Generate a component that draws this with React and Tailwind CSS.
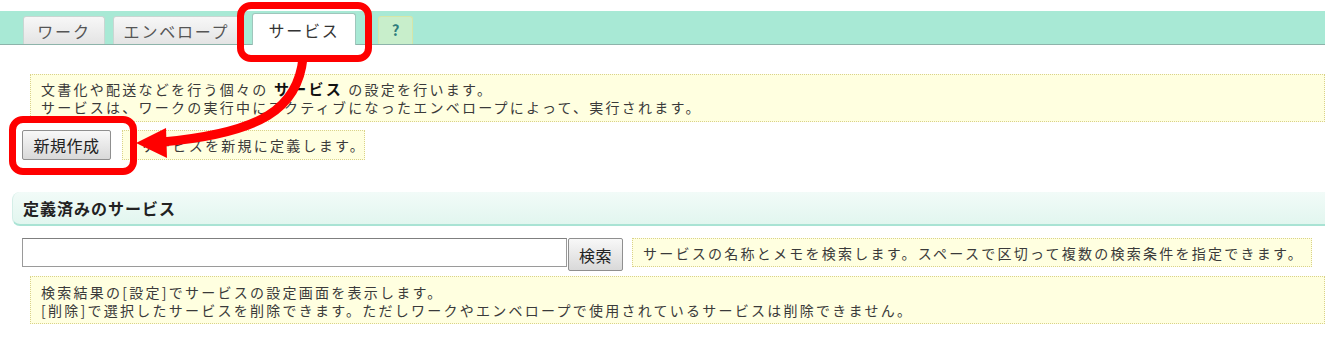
import React from 'react';

const font = { fontFamily: '"Noto Sans CJK JP", "Noto Sans", sans-serif' };

function Tab({ label, active, help, className }) {
  if (help) {
    return (
      <div className={`flex h-[28px] items-center justify-center rounded-t-[3px] border border-b-0 border-[#d6e6a8] bg-[#c8eecb] text-[15px] font-bold text-[#2f7d7d] ${className}`}>
        {label}
      </div>
    );
  }
  return (
    <div
      className={
        active
          ? `relative -mb-px flex h-[32px] items-center justify-center rounded-t-[3px] border border-b-0 border-[#9fc6bc] bg-white text-[16px] tracking-[1.8px] text-[#333] ${className}`
          : `flex h-[28px] items-center justify-center rounded-t-[3px] border border-b-0 border-[#c9d6d2] bg-gradient-to-b from-[#f7f7f7] to-[#e4e4e4] text-[16px] tracking-[1.8px] text-[#555] ${className}`
      }
    >
      {label}
    </div>
  );
}

function Note({ children, className }) {
  return (
    <div className={`whitespace-nowrap border border-dotted border-[#d9d28a] bg-[#ffffe0] text-[14px] leading-[18px] tracking-[2.25px] text-[#3a3a3a] ${className}`}>
      {children}
    </div>
  );
}

export default function App() {
  return (
    <div className="relative h-[345px] w-[1325px] overflow-hidden bg-white" style={font}>
      {/* Tabs */}
      <div className="mt-[11px] flex h-[34px] items-end border-b border-[#8db3aa] bg-[#a8e9d5] pl-[23px]">
        <Tab label="ワーク" className="w-[82px]" />
        <Tab label="エンベロープ" className="ml-[8px] w-[127px]" />
        <Tab label="サービス" active className="ml-[12px] w-[104px]" />
        <Tab label="?" help className="ml-[22px] w-[35px]" />
      </div>

      <Note className="ml-[30px] mt-[29px] h-[48px] px-[10px] pt-[5px]">
        <div>
          文書化や配送などを行う個々の <b className="text-[15px] font-bold text-[#111]">サービス</b> の設定を行います。
        </div>
        <div>サービスは、ワークの実行中にアクティブになったエンベロープによって、実行されます。</div>
      </Note>

      <div className="mt-[8px] flex items-center pl-[22px]">
        <button className="h-[30px] w-[89px] rounded-[2px] border border-[#8f8f8f] bg-gradient-to-b from-[#f8f8f8] to-[#d9d9d9] text-[16px] tracking-[0.5px] text-[#222]">
          新規作成
        </button>
        <Note className="ml-[11px] flex h-[30px] w-[243px] items-center pl-[17px]">
          サービスを新規に定義します。
        </Note>
      </div>

      {/* Section heading */}
      <div className="ml-[12px] mt-[32px] flex h-[34px] items-center rounded-l-[8px] border-b-2 border-l border-[#a9e3d4] border-l-[#d4eee7] bg-gradient-to-b from-[#f2fbf8] to-[#e2f6ef] pl-[10px] text-[16px] font-bold tracking-[1px] text-[#222]">
        定義済みのサービス
      </div>

      <div className="mt-[12px] flex items-start pl-[22px]">
        <input className="h-[29px] w-[545px] border border-[#9a9a9a] border-t-[#7f7f7f] bg-white outline-none" />
        <button className="ml-px h-[33px] w-[55px] rounded-[2px] border border-[#8f8f8f] bg-gradient-to-b from-[#f8f8f8] to-[#d9d9d9] text-[16px] tracking-[0.5px] text-[#222]">
          検索
        </button>
        <Note className="ml-[9px] flex h-[29px] w-[680px] items-center pl-[10px]">
          サービスの名称とメモを検索します。スペースで区切って複数の検索条件を指定できます。
        </Note>
      </div>

      <Note className="ml-[30px] mt-[5px] h-[48px] px-[10px] pt-[6px]">
        <div>検索結果の[設定]でサービスの設定画面を表示します。</div>
        <div>[削除]で選択したサービスを削除できます。ただしワークやエンベロープで使用されているサービスは削除できません。</div>
      </Note>

      {/* Red callouts */}
      <div className="pointer-events-none absolute left-[237px] top-[2px] h-[60px] w-[135px] rounded-[14px] border-[7px] border-[#ff0000]" />
      <div className="pointer-events-none absolute left-[9px] top-[116px] h-[59px] w-[128px] rounded-[14px] border-[7px] border-[#ff0000]" />
      <svg className="pointer-events-none absolute left-0 top-0" width="1325" height="345">
        <path d="M303 58 C 298 108, 262 133, 162 142" fill="none" stroke="#ff0000" strokeWidth="9" />
        <polygon points="136,143 166,128 167,158" fill="#ff0000" />
      </svg>
    </div>
  );
}
